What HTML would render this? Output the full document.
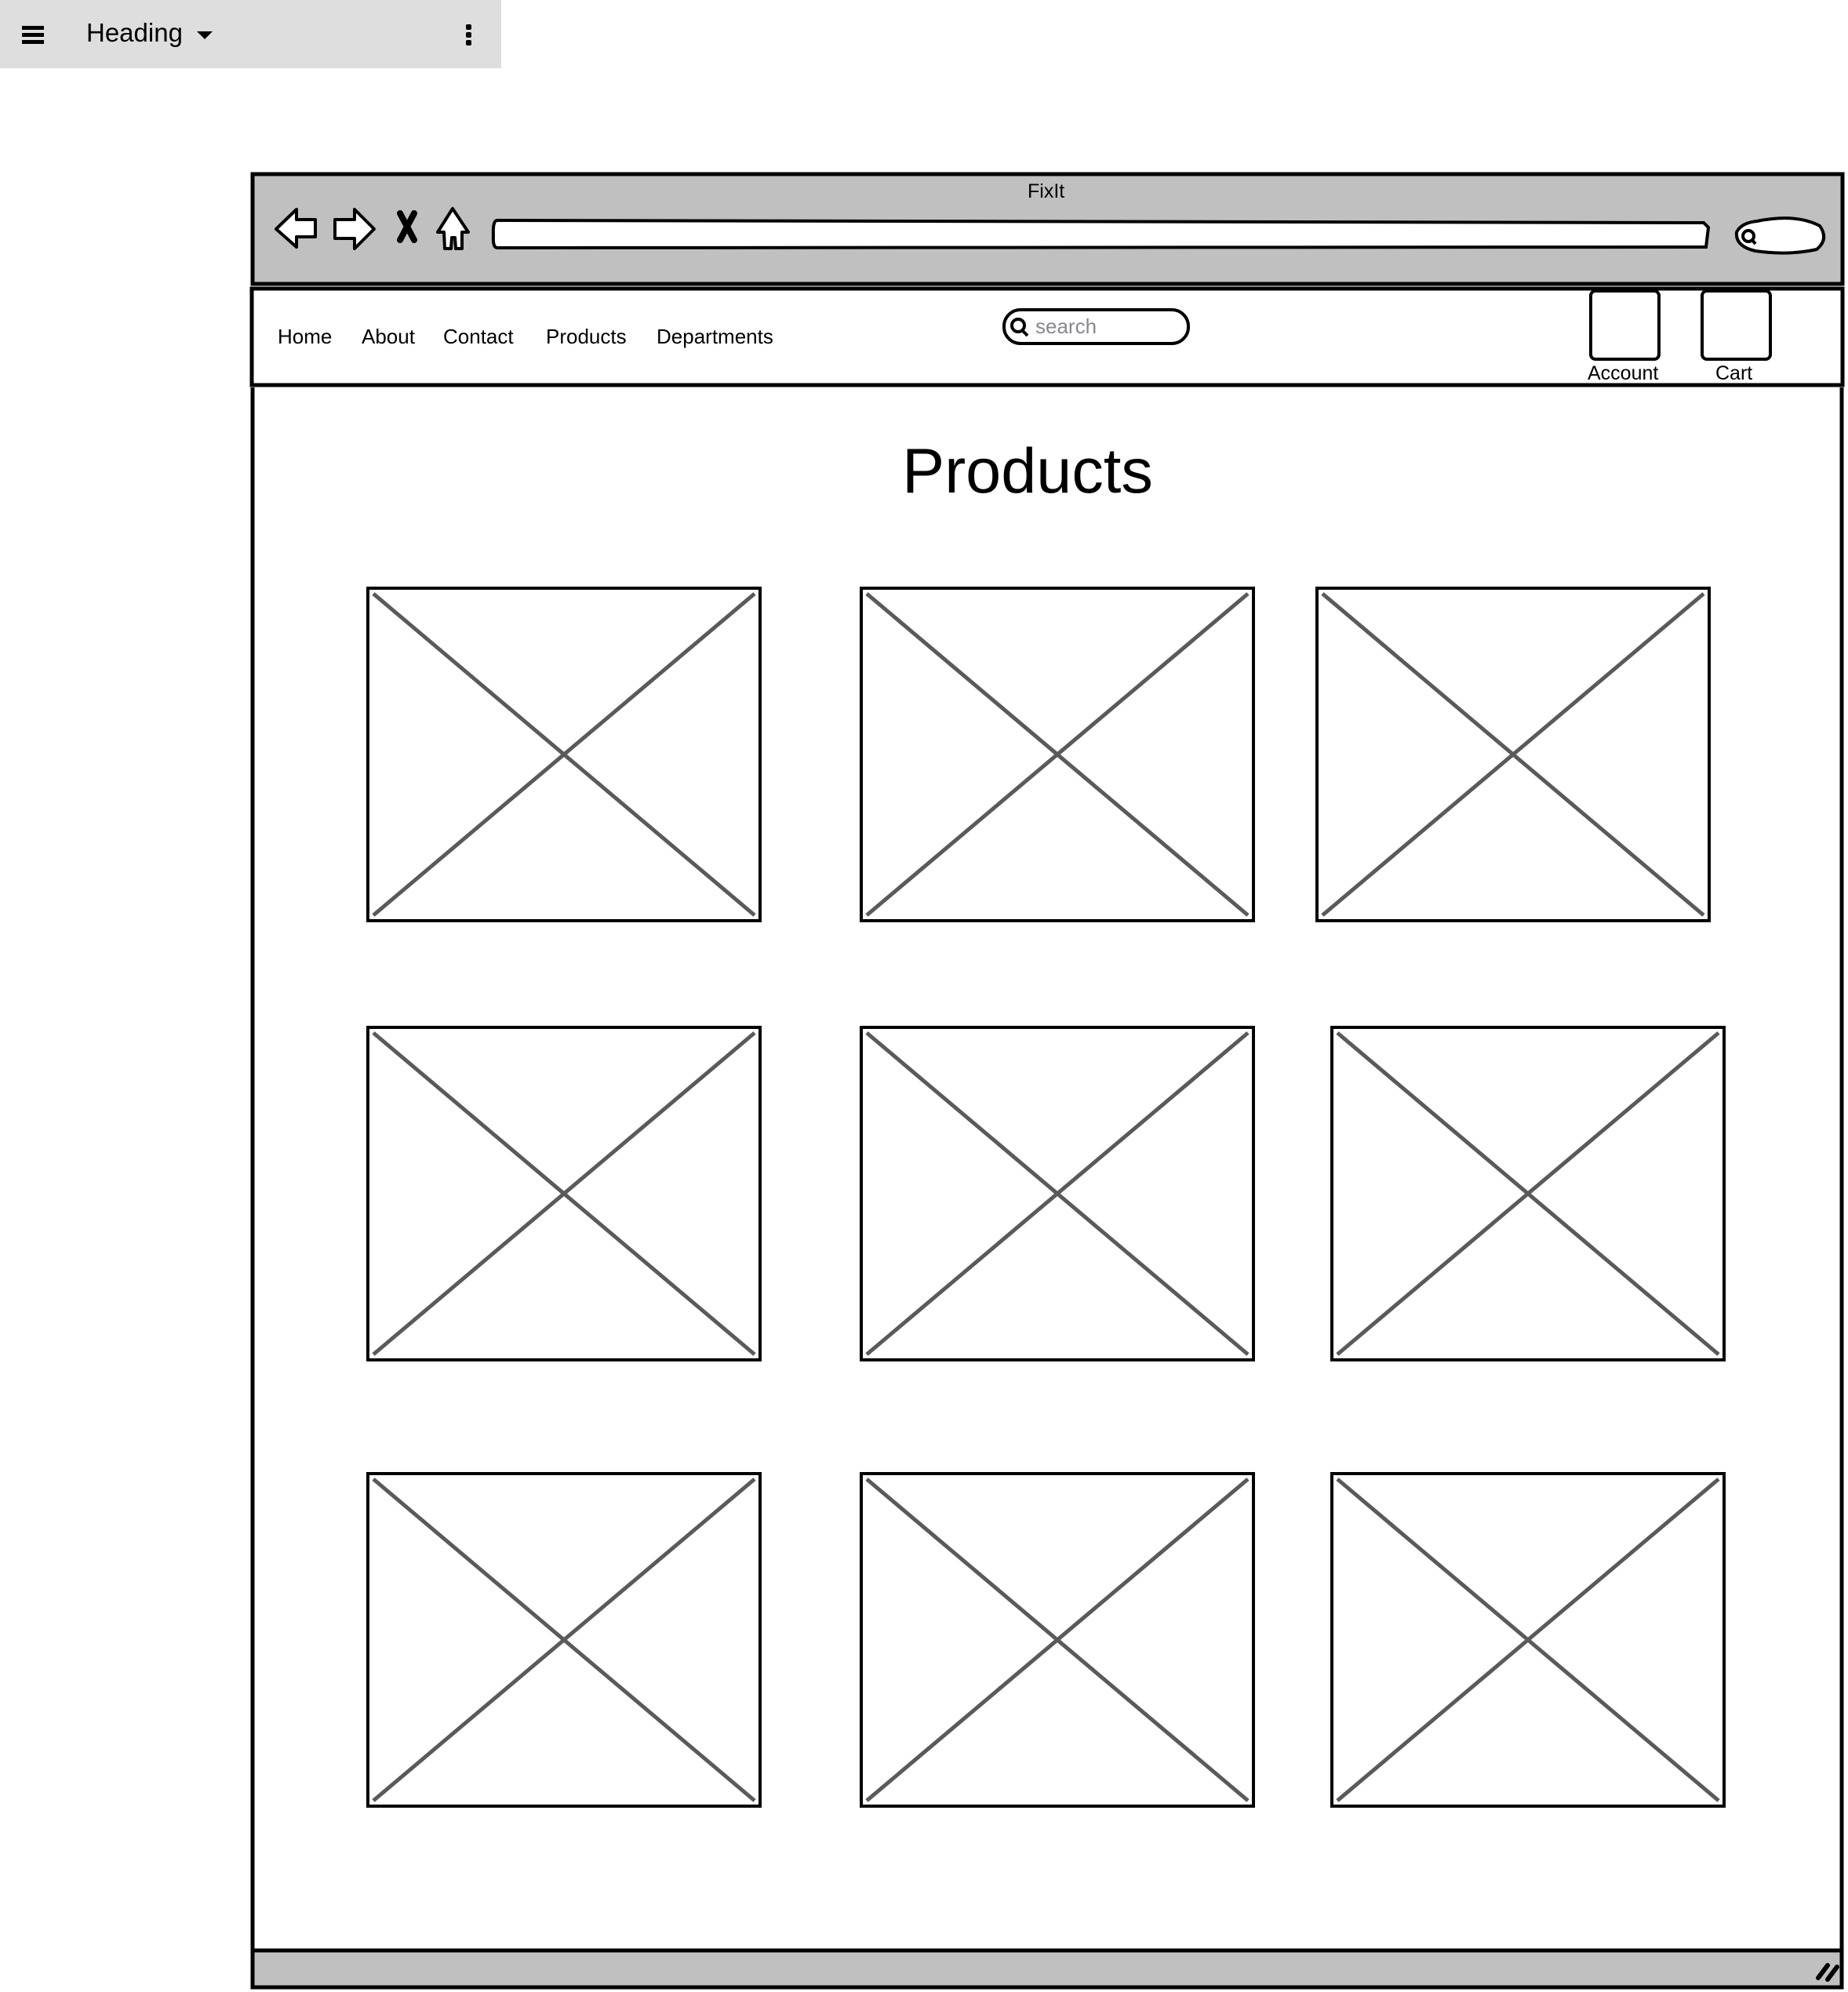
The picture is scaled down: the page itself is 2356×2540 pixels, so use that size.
<!DOCTYPE html>
<html><head><meta charset="utf-8"><style>
html,body{margin:0;padding:0;background:#fff;width:2356px;height:2540px;overflow:hidden}
body{position:relative;font-family:"Liberation Sans",sans-serif}
.t{position:absolute;white-space:nowrap;color:#000;line-height:1}
</style></head><body>
<svg width="2356" height="2540" style="position:absolute;left:0;top:0">
<rect x="0" y="0" width="639" height="87" fill="#dedede"/>
<rect x="28" y="33" width="28" height="5" fill="#000"/>
<rect x="28" y="42" width="28" height="5" fill="#000"/>
<rect x="28" y="51" width="28" height="5" fill="#000"/>
<polygon points="251,40 271,40 261,50" fill="#000"/>
<rect x="594" y="31" width="7" height="7" rx="2" fill="#000"/>
<rect x="594" y="41" width="7" height="7" rx="2" fill="#000"/>
<rect x="594" y="51" width="7" height="7" rx="2" fill="#000"/>
<rect x="322" y="222" width="2027" height="140" fill="#c0c0c0" stroke="#000" stroke-width="5"/>
<rect x="321" y="368" width="2028" height="123" fill="#fff" stroke="#000" stroke-width="5"/>
<line x1="322" y1="494" x2="322" y2="2535" stroke="#000" stroke-width="5"/>
<line x1="2348" y1="494" x2="2348" y2="2535" stroke="#000" stroke-width="5"/>
<rect x="322" y="2487" width="2026" height="47" fill="#c0c0c0" stroke="#000" stroke-width="5"/>
<line x1="2318" y1="2522" x2="2330" y2="2506" stroke="#000" stroke-width="6" stroke-linecap="round"/>
<line x1="2330" y1="2524" x2="2342" y2="2508" stroke="#000" stroke-width="6" stroke-linecap="round"/>
<path d="M378,267 L352,292 L378,315 L378,302 L402,302 L402,280 L378,280 Z" fill="#fff" stroke="#000" stroke-width="4" stroke-linejoin="round"/>
<path d="M452,267 L477,292 L452,317 L452,304 L427,304 L427,280 L452,280 Z" fill="#fff" stroke="#000" stroke-width="4" stroke-linejoin="round"/>
<path d="M510,272 L528,306 M528,272 L510,306" stroke="#000" stroke-width="8" stroke-linecap="round"/>
<path d="M577,266 L558,296 L566,296 L567,317 L575,317 L576,303 L580,303 L581,317 L589,317 L589,296 L597,296 Z" fill="#fff" stroke="#000" stroke-width="4" stroke-linejoin="round"/>
<path d="M634,281 L2172,284 L2178,290 L2175,315 L634,316 Q628,316 629,300 Q628,281 634,281 Z" fill="#fff" stroke="#000" stroke-width="4"/>
<path d="M2240,282 Q2290,272 2320,288 Q2332,305 2316,318 Q2280,326 2238,320 Q2212,314 2214,296 Q2220,284 2240,282 Z" fill="#fff" stroke="#000" stroke-width="4"/>
<circle cx="2229" cy="301" r="7" fill="none" stroke="#000" stroke-width="4"/>
<line x1="2233" y1="305" x2="2238" y2="311" stroke="#000" stroke-width="4"/>
<rect x="1280" y="395" width="235" height="43" rx="21" fill="#fff" stroke="#000" stroke-width="4"/>
<circle cx="1298" cy="415" r="8" fill="none" stroke="#000" stroke-width="4"/>
<line x1="1303" y1="421" x2="1310" y2="428" stroke="#000" stroke-width="4"/>
<rect x="2028" y="371" width="87" height="87" rx="6" fill="#fff" stroke="#000" stroke-width="4"/>
<rect x="2170" y="371" width="87" height="87" rx="6" fill="#fff" stroke="#000" stroke-width="4"/>
<g fill="#fff" stroke="#000" stroke-width="4">
<rect x="469" y="750" width="500" height="424"/>
<rect x="1098" y="750" width="500" height="424"/>
<rect x="1679" y="750" width="500" height="424"/>
<rect x="469" y="1310" width="500" height="424"/>
<rect x="1098" y="1310" width="500" height="424"/>
<rect x="1698" y="1310" width="500" height="424"/>
<rect x="469" y="1879" width="500" height="424"/>
<rect x="1098" y="1879" width="500" height="424"/>
<rect x="1698" y="1879" width="500" height="424"/>
</g>
<g stroke="#5a5a5a" stroke-width="5">
<path d="M476,757 L962,1167 M962,757 L476,1167"/>
<path d="M1105,757 L1591,1167 M1591,757 L1105,1167"/>
<path d="M1686,757 L2172,1167 M2172,757 L1686,1167"/>
<path d="M476,1317 L962,1727 M962,1317 L476,1727"/>
<path d="M1105,1317 L1591,1727 M1591,1317 L1105,1727"/>
<path d="M1705,1317 L2191,1727 M2191,1317 L1705,1727"/>
<path d="M476,1886 L962,2296 M962,1886 L476,2296"/>
<path d="M1105,1886 L1591,2296 M1591,1886 L1105,2296"/>
<path d="M1705,1886 L2191,2296 M2191,1886 L1705,2296"/>
</g>
</svg>
<div class="t" style="left:110px;top:25px;font-size:33px">Heading</div>
<div class="t" style="left:1310px;top:232px;font-size:25px">FixIt</div>
<div class="t" style="left:354px;top:416px;font-size:26px">Home</div>
<div class="t" style="left:461px;top:416px;font-size:26px">About</div>
<div class="t" style="left:565px;top:416px;font-size:26px">Contact</div>
<div class="t" style="left:696px;top:416px;font-size:26px">Products</div>
<div class="t" style="left:837px;top:416px;font-size:26px">Departments</div>
<div class="t" style="left:1320px;top:403px;font-size:26px;color:#888890">search</div>
<div class="t" style="left:2024px;top:464px;font-size:25px">Account</div>
<div class="t" style="left:2187px;top:464px;font-size:25px">Cart</div>
<div class="t" style="left:1150px;top:561px;width:320px;text-align:center;font-size:81px">Products</div>
</body></html>
